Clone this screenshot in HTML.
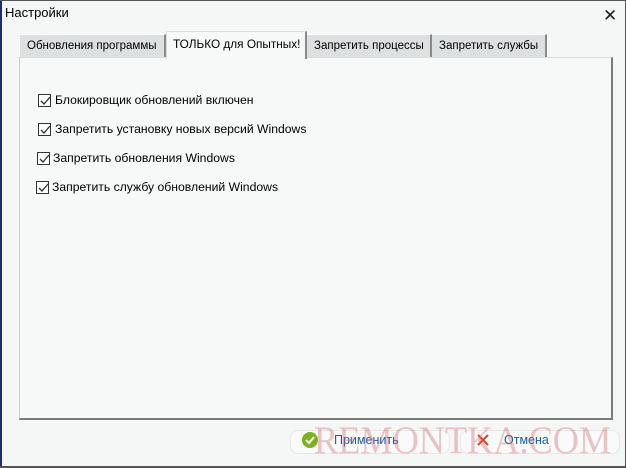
<!DOCTYPE html>
<html><head><meta charset="utf-8"><style>
*{margin:0;padding:0;box-sizing:border-box}
body{width:626px;height:468px;background:#f5f7f7;font-family:"Liberation Sans",sans-serif;font-size:12px;color:#000;position:relative;overflow:hidden}
.abs{position:absolute}
.title{left:5px;top:5px;font-size:13px}
.tab{position:absolute;top:34px;height:23px;background:#dde0e0;border-right:2px solid #8a8a8a;border-top:1px solid #fff;padding:5px 0 0 7px;font-size:11.5px;white-space:nowrap;overflow:hidden}
.cb{position:absolute;width:13px;height:13px;border:1px solid #333;background:#fff}
.cb svg{position:absolute;left:0;top:0}
.lbl{position:absolute;font-size:12.2px;white-space:nowrap}
</style></head><body>
<div class="abs" style="left:0;top:0;width:2px;height:468px;background:#1f2d6e"></div>
<div class="abs" style="left:0;top:0;width:626px;height:1px;background:#555"></div>
<div class="abs" style="left:0;bottom:0;width:626px;height:2px;background:#555"></div>
<div class="abs" style="right:0;top:0;width:1px;height:468px;background:#555"></div>
<div class="abs title">Настройки</div>
<div class="abs" style="left:603px;top:6px;font-size:17px;color:#222">✕</div>
<div class="abs" style="left:19px;top:57px;width:594px;height:363px;border-left:1px solid #ccc;border-top:1px solid #ddd;border-right:2px solid #7a7a7a;border-bottom:2px solid #7a7a7a;background:#f7f9f9"></div>
<div class="tab" style="left:20px;width:146px">Обновления программы</div>
<div class="tab" style="left:307px;width:125px">Запретить процессы</div>
<div class="tab" style="left:432px;width:115px">Запретить службы</div>
<div class="abs" style="left:166px;top:31px;width:141px;height:28px;background:#f7f9f9;border-right:2px solid #8a8a8a;border-top:1px solid #ddd;border-left:1px solid #ddd;padding:5px 0 0 6px;font-size:11.8px;white-space:nowrap;overflow:hidden">ТОЛЬКО для Опытных!</div>
<div class="cb" style="left:38px;top:94px"><svg width="13" height="13"><path d="M2 6l3 3 6-7" stroke="#333" stroke-width="1.3" fill="none"/></svg></div>
<div class="lbl" style="left:55px;top:93px">Блокировщик обновлений включен</div>
<div class="cb" style="left:38px;top:123px"><svg width="13" height="13"><path d="M2 6l3 3 6-7" stroke="#333" stroke-width="1.3" fill="none"/></svg></div>
<div class="lbl" style="left:55px;top:122px">Запретить установку новых версий Windows</div>
<div class="cb" style="left:37px;top:152px"><svg width="13" height="13"><path d="M2 6l3 3 6-7" stroke="#333" stroke-width="1.3" fill="none"/></svg></div>
<div class="lbl" style="left:53px;top:151px">Запретить обновления Windows</div>
<div class="cb" style="left:36px;top:181px"><svg width="13" height="13"><path d="M2 6l3 3 6-7" stroke="#333" stroke-width="1.3" fill="none"/></svg></div>
<div class="lbl" style="left:52px;top:180px">Запретить службу обновлений Windows</div>
<div class="abs" style="left:290px;top:430px;width:160px;height:24px;border:1px solid #e6e8e8;border-radius:8px;background:#f9fafa"></div>
<div class="abs" style="left:460px;top:430px;width:160px;height:24px;border:1px solid #e6e8e8;border-radius:8px;background:#f9fafa"></div>
<div class="abs" style="left:302px;top:432px;width:16px;height:16px;border-radius:50%;background:#7bb320"></div>
<svg class="abs" style="left:302px;top:432px" width="16" height="16"><path d="M4 8l3 3 5-6" stroke="#fff" stroke-width="2" fill="none"/></svg>
<div class="abs" style="left:334px;top:433px;color:#1a5fb0;font-size:12.5px">Применить</div>
<svg class="abs" style="left:476px;top:433px" width="14" height="14"><path d="M2 2l10 10M12 2L2 12" stroke="#d94a2a" stroke-width="2"/></svg>
<div class="abs" style="left:504px;top:433px;color:#1a5fb0;font-size:12.5px">Отмена</div>
<div class="abs" style="left:314px;top:418px;font-family:'Liberation Serif',serif;font-size:39px;color:rgba(210,90,90,0.35);white-space:nowrap;transform:scaleX(0.93);transform-origin:left">REMONTKA.COM</div>
</body></html>
